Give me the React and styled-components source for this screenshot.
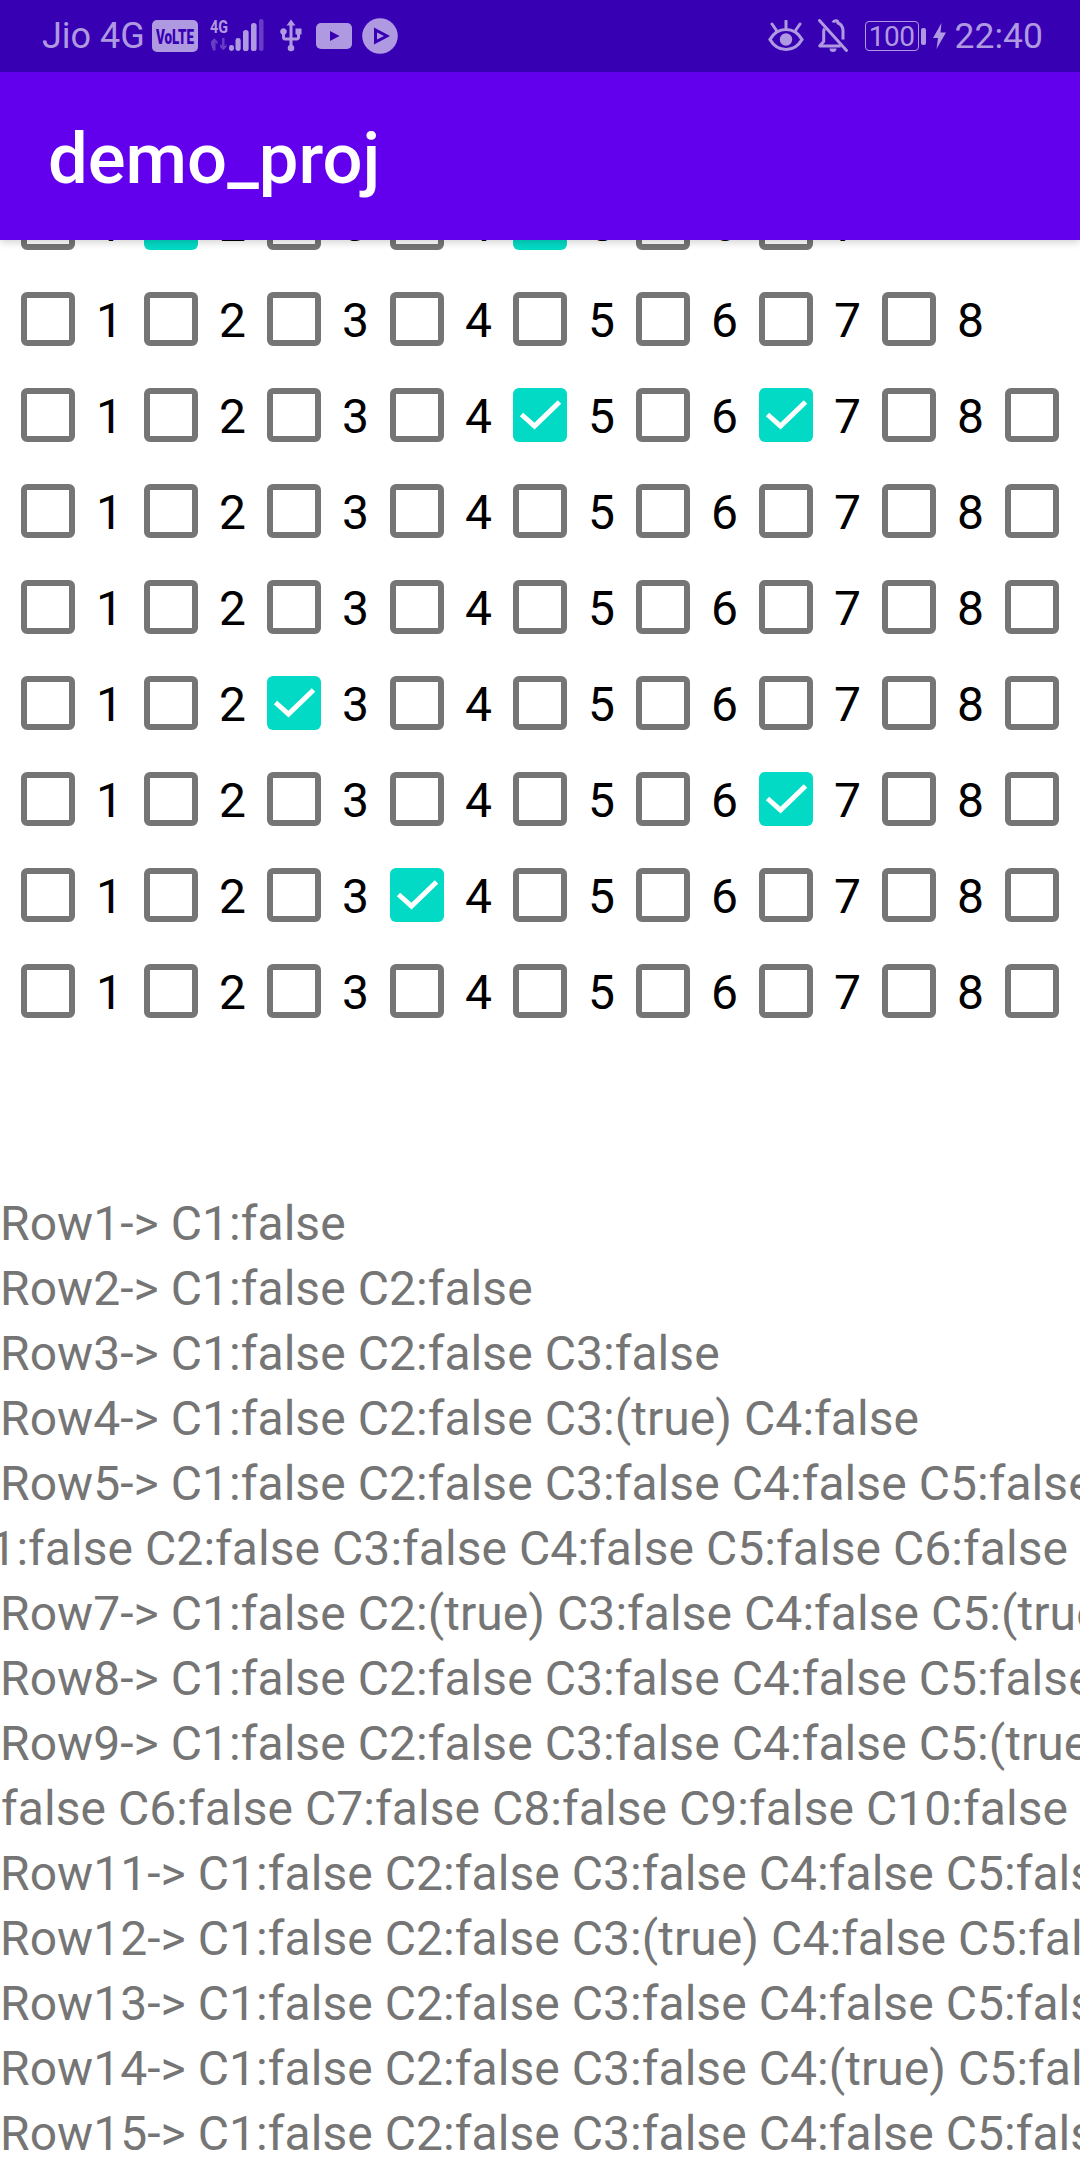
import React from "react";
import styled, { createGlobalStyle } from "styled-components";
import { MdUsb } from "react-icons/md";

const GlobalStyle = createGlobalStyle`
  html, body {
    margin: 0;
    padding: 0;
    background: #fff;
  }
  body {
    width: 1080px;
    height: 2160px;
    overflow: hidden;
    font-family: Roboto, "Liberation Sans", sans-serif;
  }
`;

const Page = styled.div`
  width: 1080px;
  height: 2160px;
  overflow: hidden;
  display: flex;
  flex-direction: column;
`;

const StatusBar = styled.div`
  position: relative;
  z-index: 2;
  flex: none;
  height: 72px;
  padding: 0 37px 0 42px;
  display: flex;
  align-items: center;
  justify-content: space-between;
  background: #3700b3;
  color: #af99e1;
`;

const StatusGroup = styled.div`
  display: flex;
  align-items: center;
`;

const StatusText = styled.span`
  font-size: ${(p) => p.$size || 36}px;
  line-height: 72px;
  margin-left: ${(p) => p.$left || 0}px;
`;

const StatusIcon = styled.svg`
  display: block;
  flex: none;
  margin-left: ${(p) => p.$left || 0}px;
`;

const UsbIcon = styled(MdUsb)`
  display: block;
  flex: none;
  margin: 0 -8px 0 9px;
`;

const Toolbar = styled.div`
  position: relative;
  z-index: 1;
  flex: none;
  box-sizing: border-box;
  height: 168px;
  padding: 5px 0 0 48px;
  display: flex;
  align-items: center;
  background: #6200ee;
  color: #fff;
  font-size: 70.6px;
  font-weight: 500;
  box-shadow: 0 3px 7px rgba(0, 0, 0, 0.16);
`;

const Content = styled.div`
  flex: 1;
  min-height: 0;
  overflow: hidden;
`;

const Grid = styled.div`
  margin-top: -65px;
  margin-bottom: 152px;
`;

const Row = styled.div`
  display: flex;
  height: 96px;
`;

const Cell = styled.div`
  flex: none;
  width: 123px;
  box-sizing: border-box;
  padding-left: 21px;
  display: flex;
  align-items: center;
`;

const Box = styled.div`
  flex: none;
  width: 54px;
  height: 54px;
  box-sizing: border-box;
  border-radius: 6px;
  border: ${(p) => (p.$checked ? "none" : "6px solid #757575")};
  background: ${(p) => (p.$checked ? "#03dac5" : "transparent")};
`;

const Tick = styled.svg`
  display: block;
  width: 54px;
  height: 54px;
`;

const Label = styled.span`
  margin-left: 21px;
  padding-top: 3px;
  font-size: 48px;
  line-height: 56px;
  color: #000;
`;

const Lines = styled.div`
  color: #757575;
  font-size: 48px;
  line-height: 65px;
  letter-spacing: 0.06px;
`;

const Line = styled.div`
  display: flex;
  justify-content: ${(p) => (p.$end ? "flex-end" : "flex-start")};
  height: 65px;
  overflow: hidden;
`;

const LineText = styled.span`
  flex: none;
  white-space: pre;
`;

// row -> how many boxes and which ones are ticked
const rows = [
  { count: 7, on: [2, 5] },
  { count: 8, on: [] },
  { count: 9, on: [5, 7] },
  { count: 9, on: [] },
  { count: 9, on: [] },
  { count: 9, on: [3] },
  { count: 9, on: [7] },
  { count: 9, on: [4] },
  { count: 9, on: [] },
];

// text rows: columns that read (true), and the two rows that sit flush right
const textRows = [
  { n: 1 },
  { n: 2 },
  { n: 3 },
  { n: 4, on: [3] },
  { n: 5 },
  { n: 6, end: true },
  { n: 7, on: [2, 5] },
  { n: 8 },
  { n: 9, on: [5] },
  { n: 10, end: true },
  { n: 11 },
  { n: 12, on: [3] },
  { n: 13 },
  { n: 14, on: [4] },
  { n: 15 },
];

const rowText = ({ n, on = [] }) => {
  let s = `Row${n}-> `;
  for (let c = 1; c <= n; c++) {
    s += `C${c}:${on.includes(c) ? "(true)" : "false"} `;
  }
  return s;
};

const Signal = () => (
  <StatusIcon $left={12} width="54" height="36" viewBox="0 0 54 36">
    <text x="0" y="14.5" fontFamily="Roboto" fontWeight="700" fontSize="19" fill="currentColor" textLength="18" lengthAdjust="spacingAndGlyphs">
      4G
    </text>
    <g fill="currentColor" opacity="0.4">
      <path d="M4 32.5h2.5v-8l2 2v-3l-3.2-3.2L2 23.5v3z" transform="translate(-1 0)" />
      <path d="M12 20h2.5v8l2-2v3l-3.2 3.2-3.3-3.2v-3l2 2z" />
      <rect x="49" y="1" width="4.5" height="32" rx="2" />
    </g>
    <g fill="currentColor">
      <rect x="19" y="27" width="5" height="6" rx="2.4" />
      <rect x="25.5" y="20" width="5.2" height="13" rx="2.4" />
      <rect x="33" y="12" width="5.6" height="21" rx="2.6" />
      <rect x="41" y="5" width="5.6" height="28" rx="2.6" />
    </g>
  </StatusIcon>
);

const VolteBadge = () => (
  <StatusIcon $left={7} width="46" height="32" viewBox="0 0 46 32">
    <rect width="46" height="32" rx="5" fill="currentColor" />
    <text x="4" y="23.5" fontFamily="Roboto" fontWeight="900" fontSize="21" fill="#3700b3" textLength="38" lengthAdjust="spacingAndGlyphs">
      VoLTE
    </text>
  </StatusIcon>
);

const YoutubeIcon = () => (
  <StatusIcon $left={15} width="36" height="26" viewBox="0 0 36 26">
    <rect width="36" height="26" rx="5" fill="currentColor" />
    <path d="M14 8l9.5 5L14 18z" fill="#3700b3" />
  </StatusIcon>
);

const PlayCircle = () => (
  <StatusIcon $left={10} width="36" height="36" viewBox="0 0 36 36">
    <circle cx="18" cy="18" r="17.8" fill="currentColor" />
    <path d="M12 9.5L28 18l-16 8.5z" fill="#3700b3" />
    <path d="M15 14.5L22 18l-7 3.5z" fill="currentColor" />
  </StatusIcon>
);

const EyeIcon = () => (
  <StatusIcon width="36" height="32" viewBox="0 0 36 32" fill="none" stroke="currentColor">
    <path d="M2 19.5C6 12.5 11.5 9.5 18 9.5s12 3 16 10c-4 7-9.5 10-16 10s-12-3-16-10z" strokeWidth="3.2" />
    <circle cx="18" cy="19.5" r="6.2" fill="currentColor" stroke="none" />
    <path d="M18 1v7M4 4l4.5 6.5M32 4l-4.5 6.5" strokeWidth="3" strokeLinecap="round" />
  </StatusIcon>
);

const BellOffIcon = () => (
  <StatusIcon $left={13} width="32" height="34" viewBox="0 0 32 34" fill="none" stroke="currentColor">
    <path d="M16 3.5c1 -2.5 5 -2.5 5 .5c3.5 1.500 5 4.500 5 8v8.500" strokeWidth="3" />
    <path d="M7.500 9.500c-.5 1-.8 2-.8 3v10l-4 4.500h21" strokeWidth="3" strokeLinejoin="round" />
    <path d="M2.500 1.500L29.500 31.500" strokeWidth="3" strokeLinecap="round" />
    <path d="M12.500 29.500h7c0 2.500-1.500 3.500-3.500 3.500s-3.500-1-3.500-3.500z" fill="currentColor" stroke="none" />
  </StatusIcon>
);

const BatteryGroup = styled.div`
  display: flex;
  align-items: center;
  margin-left: 16px;
`;

const BatteryBody = styled.div`
  box-sizing: border-box;
  width: 54px;
  height: 30px;
  border: 1.5px solid currentColor;
  border-radius: 4px;
  display: flex;
  align-items: center;
  justify-content: center;
  font-size: 28px;
  line-height: 27px;
  letter-spacing: -0.5px;
`;

const BatteryCap = styled.div`
  width: 5px;
  height: 17px;
  margin-left: 2px;
  border-radius: 2px;
  background: currentColor;
`;

const BoltIcon = () => (
  <StatusIcon $left={7} width="13" height="26" viewBox="0 0 13 26">
    <path d="M8.500 0L0 15h5L3.500 26 13 9.500H7.500z" fill="currentColor" />
  </StatusIcon>
);

export default function App() {
  return (
    <Page>
      <GlobalStyle />
      <StatusBar>
        <StatusGroup>
          <StatusText>Jio 4G</StatusText>
          <VolteBadge />
          <Signal />
          <UsbIcon size={36} />
          <YoutubeIcon />
          <PlayCircle />
        </StatusGroup>
        <StatusGroup>
          <EyeIcon />
          <BellOffIcon />
          <BatteryGroup>
            <BatteryBody>100</BatteryBody>
            <BatteryCap />
          </BatteryGroup>
          <BoltIcon />
          <StatusText $left={9} $size={35.5}>22:40</StatusText>
        </StatusGroup>
      </StatusBar>
      <Toolbar>demo_proj</Toolbar>
      <Content>
        <Grid>
          {rows.map((row, r) => (
            <Row key={r}>
              {Array.from({ length: row.count }, (_, i) => {
                const checked = row.on.includes(i + 1);
                return (
                  <Cell key={i}>
                    <Box $checked={checked}>
                      {checked && (
                        <Tick viewBox="0 0 54 54">
                          <path d="M8.500 26.500L21.500 38L46.500 14" fill="none" stroke="#fff" strokeWidth="5" />
                        </Tick>
                      )}
                    </Box>
                    <Label>{i + 1}</Label>
                  </Cell>
                );
              })}
            </Row>
          ))}
        </Grid>
        <Lines>
          {textRows.map((row) => (
            <Line key={row.n} $end={row.end}>
              <LineText>{rowText(row)}</LineText>
            </Line>
          ))}
        </Lines>
      </Content>
    </Page>
  );
}
